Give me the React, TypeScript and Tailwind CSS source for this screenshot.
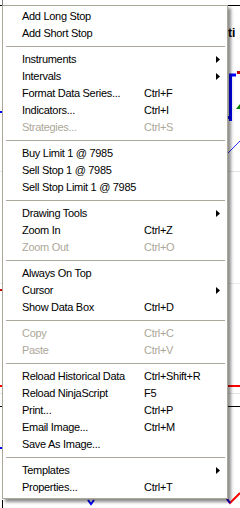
type Item =
  | { sep: true }
  | { sep?: false; label: string; keys?: string; sub?: boolean; off?: boolean };

const items: Item[] = [
  { label: "Add Long Stop" },
  { label: "Add Short Stop" },
  { sep: true },
  { label: "Instruments", sub: true },
  { label: "Intervals", sub: true },
  { label: "Format Data Series...", keys: "Ctrl+F" },
  { label: "Indicators...", keys: "Ctrl+I" },
  { label: "Strategies...", keys: "Ctrl+S", off: true },
  { sep: true },
  { label: "Buy Limit 1 @ 7985" },
  { label: "Sell Stop 1 @ 7985" },
  { label: "Sell Stop Limit 1 @ 7985" },
  { sep: true },
  { label: "Drawing Tools", sub: true },
  { label: "Zoom In", keys: "Ctrl+Z" },
  { label: "Zoom Out", keys: "Ctrl+O", off: true },
  { sep: true },
  { label: "Always On Top" },
  { label: "Cursor", sub: true },
  { label: "Show Data Box", keys: "Ctrl+D" },
  { sep: true },
  { label: "Copy", keys: "Ctrl+C", off: true },
  { label: "Paste", keys: "Ctrl+V", off: true },
  { sep: true },
  { label: "Reload Historical Data", keys: "Ctrl+Shift+R" },
  { label: "Reload NinjaScript", keys: "F5" },
  { label: "Print...", keys: "Ctrl+P" },
  { label: "Email Image...", keys: "Ctrl+M" },
  { label: "Save As Image..." },
  { sep: true },
  { label: "Templates", sub: true },
  { label: "Properties...", keys: "Ctrl+T" },
];

function Chart() {
  return (
    <svg className="absolute inset-0" width="240" height="508" viewBox="0 0 240 508">
      {/* grid */}
      <line x1="0" y1="171.5" x2="240" y2="171.5" stroke="#e4e4e4" />
      <line x1="0" y1="283.5" x2="240" y2="283.5" stroke="#ececec" />
      <line x1="0" y1="393.5" x2="240" y2="393.5" stroke="#e4e4e4" />
      <line x1="2.5" y1="0" x2="2.5" y2="6" stroke="#808080" />
      <line x1="2.5" y1="500" x2="2.5" y2="508" stroke="#000" />
      <line x1="0" y1="5.5" x2="240" y2="5.5" stroke="#000" />
      <line x1="0" y1="406.5" x2="240" y2="406.5" stroke="#000" />
      {/* price bars */}
      <rect x="237" y="71" width="3" height="3" fill="#c00000" />
      <path d="M236 75 H230.5 V121" stroke="#0000ff" strokeWidth="3" fill="none" />
      <rect x="228" y="116" width="2" height="3" fill="#0000ff" />
      <path d="M236 109 L240 104 L240 109 Z" fill="#008000" />
      <line x1="228" y1="153" x2="240" y2="141" stroke="#3030ff" />
      <line x1="0" y1="386" x2="240" y2="386" stroke="#ff0000" strokeWidth="2" />
      <rect x="0" y="289" width="2" height="2" fill="#c00000" />
      <rect x="0" y="111" width="2" height="2" fill="#0000ff" />
      <rect x="0" y="447" width="2" height="2" fill="#0000ff" />
      <path d="M88 500 L91 504 L94 500" stroke="#0000ff" strokeWidth="2" fill="none" />
      <path d="M227 499 L230 503 L240 493" stroke="#ff0000" strokeWidth="2" fill="none" />
      <path d="M227 499 L230 503" stroke="#0000ff" strokeWidth="2" fill="none" />
    </svg>
  );
}

function Arrow() {
  return (
    <svg width="4" height="7" viewBox="0 0 4 7" className="ml-auto mr-[7px]">
      <path d="M0 0 L4 3.5 L0 7 Z" fill="#000" />
    </svg>
  );
}

export default function App() {
  return (
    <div
      className="relative w-[240px] h-[508px] overflow-hidden bg-white"
      style={{ fontFamily: '"Liberation Sans", Arial, sans-serif' }}
    >
      <Chart />
      <span className="absolute left-[228px] top-[26px] text-[12px] font-bold leading-[14px] text-black">ti</span>

      <div className="absolute left-[2px] top-[5px] w-[226px] border border-[#aca899] bg-white py-[2px] shadow-[3px_3px_3px_rgba(0,0,0,0.45)]">
        {items.map((it, i) =>
          it.sep ? (
            <div key={i} className="h-[9px] flex items-center ml-[3px] mr-[2px]">
              <div className="w-full border-t border-[#aca899]" />
            </div>
          ) : (
            <div
              key={i}
              className={`h-[17px] flex items-center text-[11px] tracking-[-0.3px] ${
                it.off ? "text-[#aca899]" : "text-black"
              }`}
            >
              <span className="w-[141px] pl-[19px] whitespace-nowrap">{it.label}</span>
              {it.keys && <span className="whitespace-nowrap">{it.keys}</span>}
              {it.sub && <Arrow />}
            </div>
          )
        )}
      </div>
    </div>
  );
}
